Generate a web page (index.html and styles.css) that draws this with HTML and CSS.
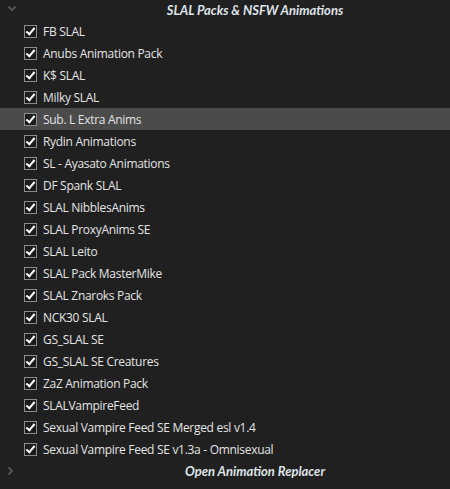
FILE: index.html
```html
<!DOCTYPE html>
<html>
<head>
<meta charset="utf-8">
<link rel="stylesheet" href="styles.css">
</head>
<body>
<div class="panel">
  <div class="header">
    <svg class="chev" width="10" height="7" viewBox="0 0 10 7"><path d="M1.5 1.5 L5 5 L8.5 1.5" fill="none" stroke="#525252" stroke-width="2"/></svg>
    <span class="title">SLAL Packs &amp; NSFW Animations</span>
  </div>
  <ul class="list">
    <li class="row"><span class="cb"></span><span class="label">FB SLAL</span></li>
    <li class="row"><span class="cb"></span><span class="label">Anubs Animation Pack</span></li>
    <li class="row"><span class="cb"></span><span class="label">K$ SLAL</span></li>
    <li class="row"><span class="cb"></span><span class="label">Milky SLAL</span></li>
    <li class="row hl"><span class="cb"></span><span class="label">Sub. L Extra Anims</span></li>
    <li class="row"><span class="cb"></span><span class="label">Rydin Animations</span></li>
    <li class="row"><span class="cb"></span><span class="label">SL - Ayasato Animations</span></li>
    <li class="row"><span class="cb"></span><span class="label">DF Spank SLAL</span></li>
    <li class="row"><span class="cb"></span><span class="label">SLAL NibblesAnims</span></li>
    <li class="row"><span class="cb"></span><span class="label">SLAL ProxyAnims SE</span></li>
    <li class="row"><span class="cb"></span><span class="label">SLAL Leito</span></li>
    <li class="row"><span class="cb"></span><span class="label">SLAL Pack MasterMike</span></li>
    <li class="row"><span class="cb"></span><span class="label">SLAL Znaroks Pack</span></li>
    <li class="row"><span class="cb"></span><span class="label">NCK30 SLAL</span></li>
    <li class="row"><span class="cb"></span><span class="label">GS_SLAL SE</span></li>
    <li class="row"><span class="cb"></span><span class="label">GS_SLAL SE Creatures</span></li>
    <li class="row"><span class="cb"></span><span class="label">ZaZ Animation Pack</span></li>
    <li class="row"><span class="cb"></span><span class="label">SLALVampireFeed</span></li>
    <li class="row"><span class="cb"></span><span class="label">Sexual Vampire Feed SE Merged esl v1.4</span></li>
    <li class="row"><span class="cb"></span><span class="label">Sexual Vampire Feed SE v1.3a - Omnisexual</span></li>
  </ul>
  <div class="header footer">
    <svg class="chev" width="7" height="10" viewBox="0 0 7 10"><path d="M1.5 1.5 L5 5 L1.5 8.5" fill="none" stroke="#525252" stroke-width="2"/></svg>
    <span class="title">Open Animation Replacer</span>
  </div>
</div>
</body>
</html>
```
FILE: styles.css
```css
html, body {
  margin: 0;
  padding: 0;
  background: #202020;
}
.panel {
  width: 450px;
  height: 489px;
  background: #202020;
  color: #e4e4e4;
  font-family: "Open Sans", "Noto Sans", sans-serif;
  font-size: 12px;
  overflow: hidden;
}
.header {
  position: relative;
  height: 20px;
  display: flex;
  align-items: center;
  justify-content: center;
  padding-left: 60px;
}
.footer {
  height: 22px;
}
.chev {
  position: absolute;
  left: 7px;
  top: 5px;
}
.footer .chev {
  left: 7px;
  top: 6px;
}
.title {
  font-family: Lato, "Open Sans", sans-serif;
  font-weight: bold;
  font-style: italic;
  font-size: 13px;
  color: #dfe3e8;
}
.list {
  list-style: none;
  margin: 0;
  padding: 0;
}
.row {
  height: 22px;
  display: flex;
  align-items: center;
  padding-left: 24px;
}
.row.hl {
  background: #4b4b4b;
}
.cb {
  width: 11px;
  height: 11px;
  border: 1px solid #8c8c8c;
  background: #1c1c1c;
  margin-right: 6px;
  position: relative;
  flex: none;
}
.cb::after {
  content: "";
  position: absolute;
  left: 3px;
  top: 0px;
  width: 3px;
  height: 7px;
  border: solid #ffffff;
  border-width: 0 2px 2px 0;
  transform: rotate(40deg);
}
.label {
  white-space: nowrap;
  line-height: 22px;
  letter-spacing: -0.3px;
  padding-top: 1px;
}
```
